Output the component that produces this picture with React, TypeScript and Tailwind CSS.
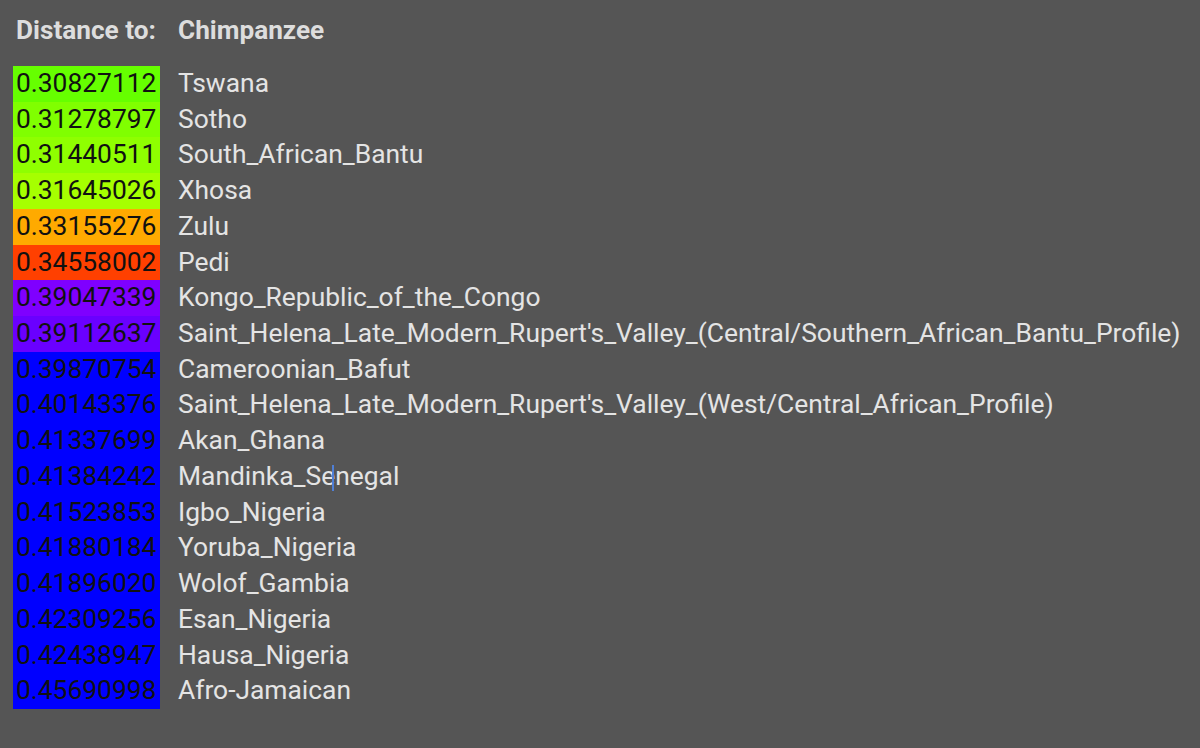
const rows: { d: string; name: string; bg: string }[] = [
  { d: '0.30827112', name: 'Tswana', bg: 'bg-[#66ff00]' },
  { d: '0.31278797', name: 'Sotho', bg: 'bg-[#80ff00]' },
  { d: '0.31440511', name: 'South_African_Bantu', bg: 'bg-[#8fff00]' },
  { d: '0.31645026', name: 'Xhosa', bg: 'bg-[#a6ff00]' },
  { d: '0.33155276', name: 'Zulu', bg: 'bg-[#ffaa00]' },
  { d: '0.34558002', name: 'Pedi', bg: 'bg-[#ff4000]' },
  { d: '0.39047339', name: 'Kongo_Republic_of_the_Congo', bg: 'bg-[#7f00ff]' },
  {
    d: '0.39112637',
    name: "Saint_Helena_Late_Modern_Rupert's_Valley_(Central/Southern_African_Bantu_Profile)",
    bg: 'bg-[#6a00ff]',
  },
  { d: '0.39870754', name: 'Cameroonian_Bafut', bg: 'bg-[#0000ff]' },
  {
    d: '0.40143376',
    name: "Saint_Helena_Late_Modern_Rupert's_Valley_(West/Central_African_Profile)",
    bg: 'bg-[#0000ff]',
  },
  { d: '0.41337699', name: 'Akan_Ghana', bg: 'bg-[#0000ff]' },
  { d: '0.41384242', name: 'Mandinka_Senegal', bg: 'bg-[#0000ff]' },
  { d: '0.41523853', name: 'Igbo_Nigeria', bg: 'bg-[#0000ff]' },
  { d: '0.41880184', name: 'Yoruba_Nigeria', bg: 'bg-[#0000ff]' },
  { d: '0.41896020', name: 'Wolof_Gambia', bg: 'bg-[#0000ff]' },
  { d: '0.42309256', name: 'Esan_Nigeria', bg: 'bg-[#0000ff]' },
  { d: '0.42438947', name: 'Hausa_Nigeria', bg: 'bg-[#0000ff]' },
  { d: '0.45690998', name: 'Afro-Jamaican', bg: 'bg-[#0000ff]' },
];

function Name({ name }: { name: string }) {
  // text caret sits inside "Mandinka_Se|negal" in the screenshot
  if (name !== 'Mandinka_Senegal') return <>{name}</>;
  return (
    <>
      Mandinka_Se
      <span className="relative inline-block w-0">
        <span className="absolute -left-[3px] top-[-20px] h-[26px] w-[2px] bg-[#4f7fd6]" />
      </span>
      negal
    </>
  );
}

export default function App() {
  return (
    <div
      className="h-[748px] w-[1200px] overflow-hidden bg-[#555555] pl-[13px] pt-[16px]"
      style={{ fontFamily: 'Roboto, "Liberation Sans", sans-serif' }}
    >
      <div className="mb-[22px] flex h-[28px] items-center text-[26.2px] font-bold leading-[28px] text-[#dddddd]">
        <span className="ml-[3px] w-[162px]">Distance to:</span>
        <span>Chimpanzee</span>
      </div>
      <div className="flex flex-col">
        {rows.map((r) => (
          <div key={r.d} className="flex h-[35.72px] items-stretch text-[26.4px] leading-[35.72px]">
            <div className={`w-[147px] shrink-0 px-[3px] text-[#111111] ${r.bg}`}>{r.d}</div>
            <div className="ml-[18px] whitespace-nowrap text-[#e4e4e4]">
              <Name name={r.name} />
            </div>
          </div>
        ))}
      </div>
    </div>
  );
}
